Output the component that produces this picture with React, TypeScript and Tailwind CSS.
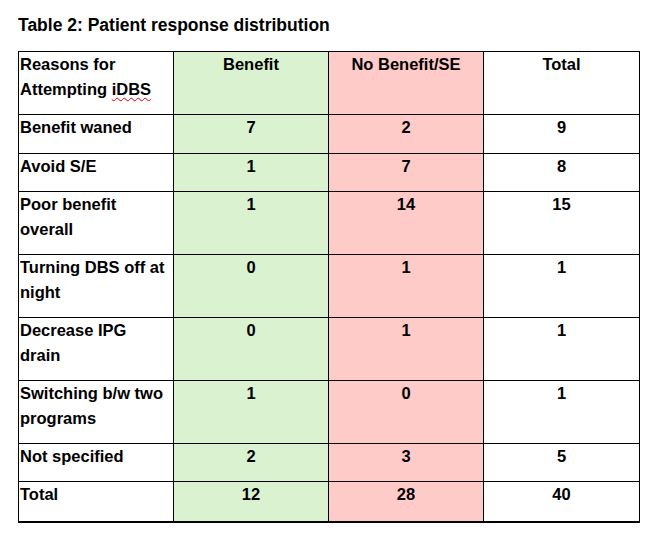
const rows: { label: string[]; h: string; b: string; n: string; t: string }[] = [
  { label: ["Benefit waned"], h: "h-[39px]", b: "7", n: "2", t: "9" },
  { label: ["Avoid S/E"], h: "h-[38px]", b: "1", n: "7", t: "8" },
  { label: ["Poor benefit", "overall"], h: "h-[63px]", b: "1", n: "14", t: "15" },
  { label: ["Turning DBS off at", "night"], h: "h-[63px]", b: "0", n: "1", t: "1" },
  { label: ["Decrease IPG", "drain"], h: "h-[63px]", b: "0", n: "1", t: "1" },
  { label: ["Switching b/w two", "programs"], h: "h-[63px]", b: "1", n: "0", t: "1" },
  { label: ["Not specified"], h: "h-[38px]", b: "2", n: "3", t: "5" },
];

export default function App() {
  return (
    <div
      className="h-[551px] w-[671px] bg-white text-black"
      style={{ fontFamily: '"Liberation Sans", Arial, sans-serif' }}
    >
      <div className="pl-[18px] pt-[13px] text-[17.5px] font-bold leading-[24px]">
        Table 2: Patient response distribution
      </div>
      <table className="ml-[18px] mt-[14px] w-[621px] table-fixed border-collapse border-b-2 border-black text-[16.5px] font-bold leading-[25px]">
        <colgroup>
          <col className="w-[155px]" />
          <col className="w-[155px]" />
          <col className="w-[155px]" />
          <col className="w-[156px]" />
        </colgroup>
        <tbody>
          <tr className="h-[63px]">
            <td className="border border-black px-[1px] align-top">
              <div>Reasons for</div>
              <div>
                Attempting{" "}
                <span className="underline decoration-red-600 decoration-wavy decoration-1 underline-offset-2">
                  iDBS
                </span>
              </div>
            </td>
            <td className="border border-black bg-[#daf2d0] text-center align-top">Benefit</td>
            <td className="border border-black bg-[#ffcbc8] text-center align-top">No Benefit/SE</td>
            <td className="border border-black text-center align-top">Total</td>
          </tr>
          {rows.map((r) => (
            <tr key={r.label.join(" ")} className={r.h}>
              <td className="border border-black px-[1px] align-top">
                {r.label.map((l, i) => (
                  <div key={i}>{l}</div>
                ))}
              </td>
              <td className="border border-black bg-[#daf2d0] text-center align-top">{r.b}</td>
              <td className="border border-black bg-[#ffcbc8] text-center align-top">{r.n}</td>
              <td className="border border-black text-center align-top">{r.t}</td>
            </tr>
          ))}
          <tr className="h-[40px]">
            <td className="border border-b-2 border-black px-[1px] align-top">Total</td>
            <td className="border border-b-2 border-black bg-[#daf2d0] text-center align-top">12</td>
            <td className="border border-b-2 border-black bg-[#ffcbc8] text-center align-top">28</td>
            <td className="border border-b-2 border-black text-center align-top">40</td>
          </tr>
        </tbody>
      </table>
    </div>
  );
}
